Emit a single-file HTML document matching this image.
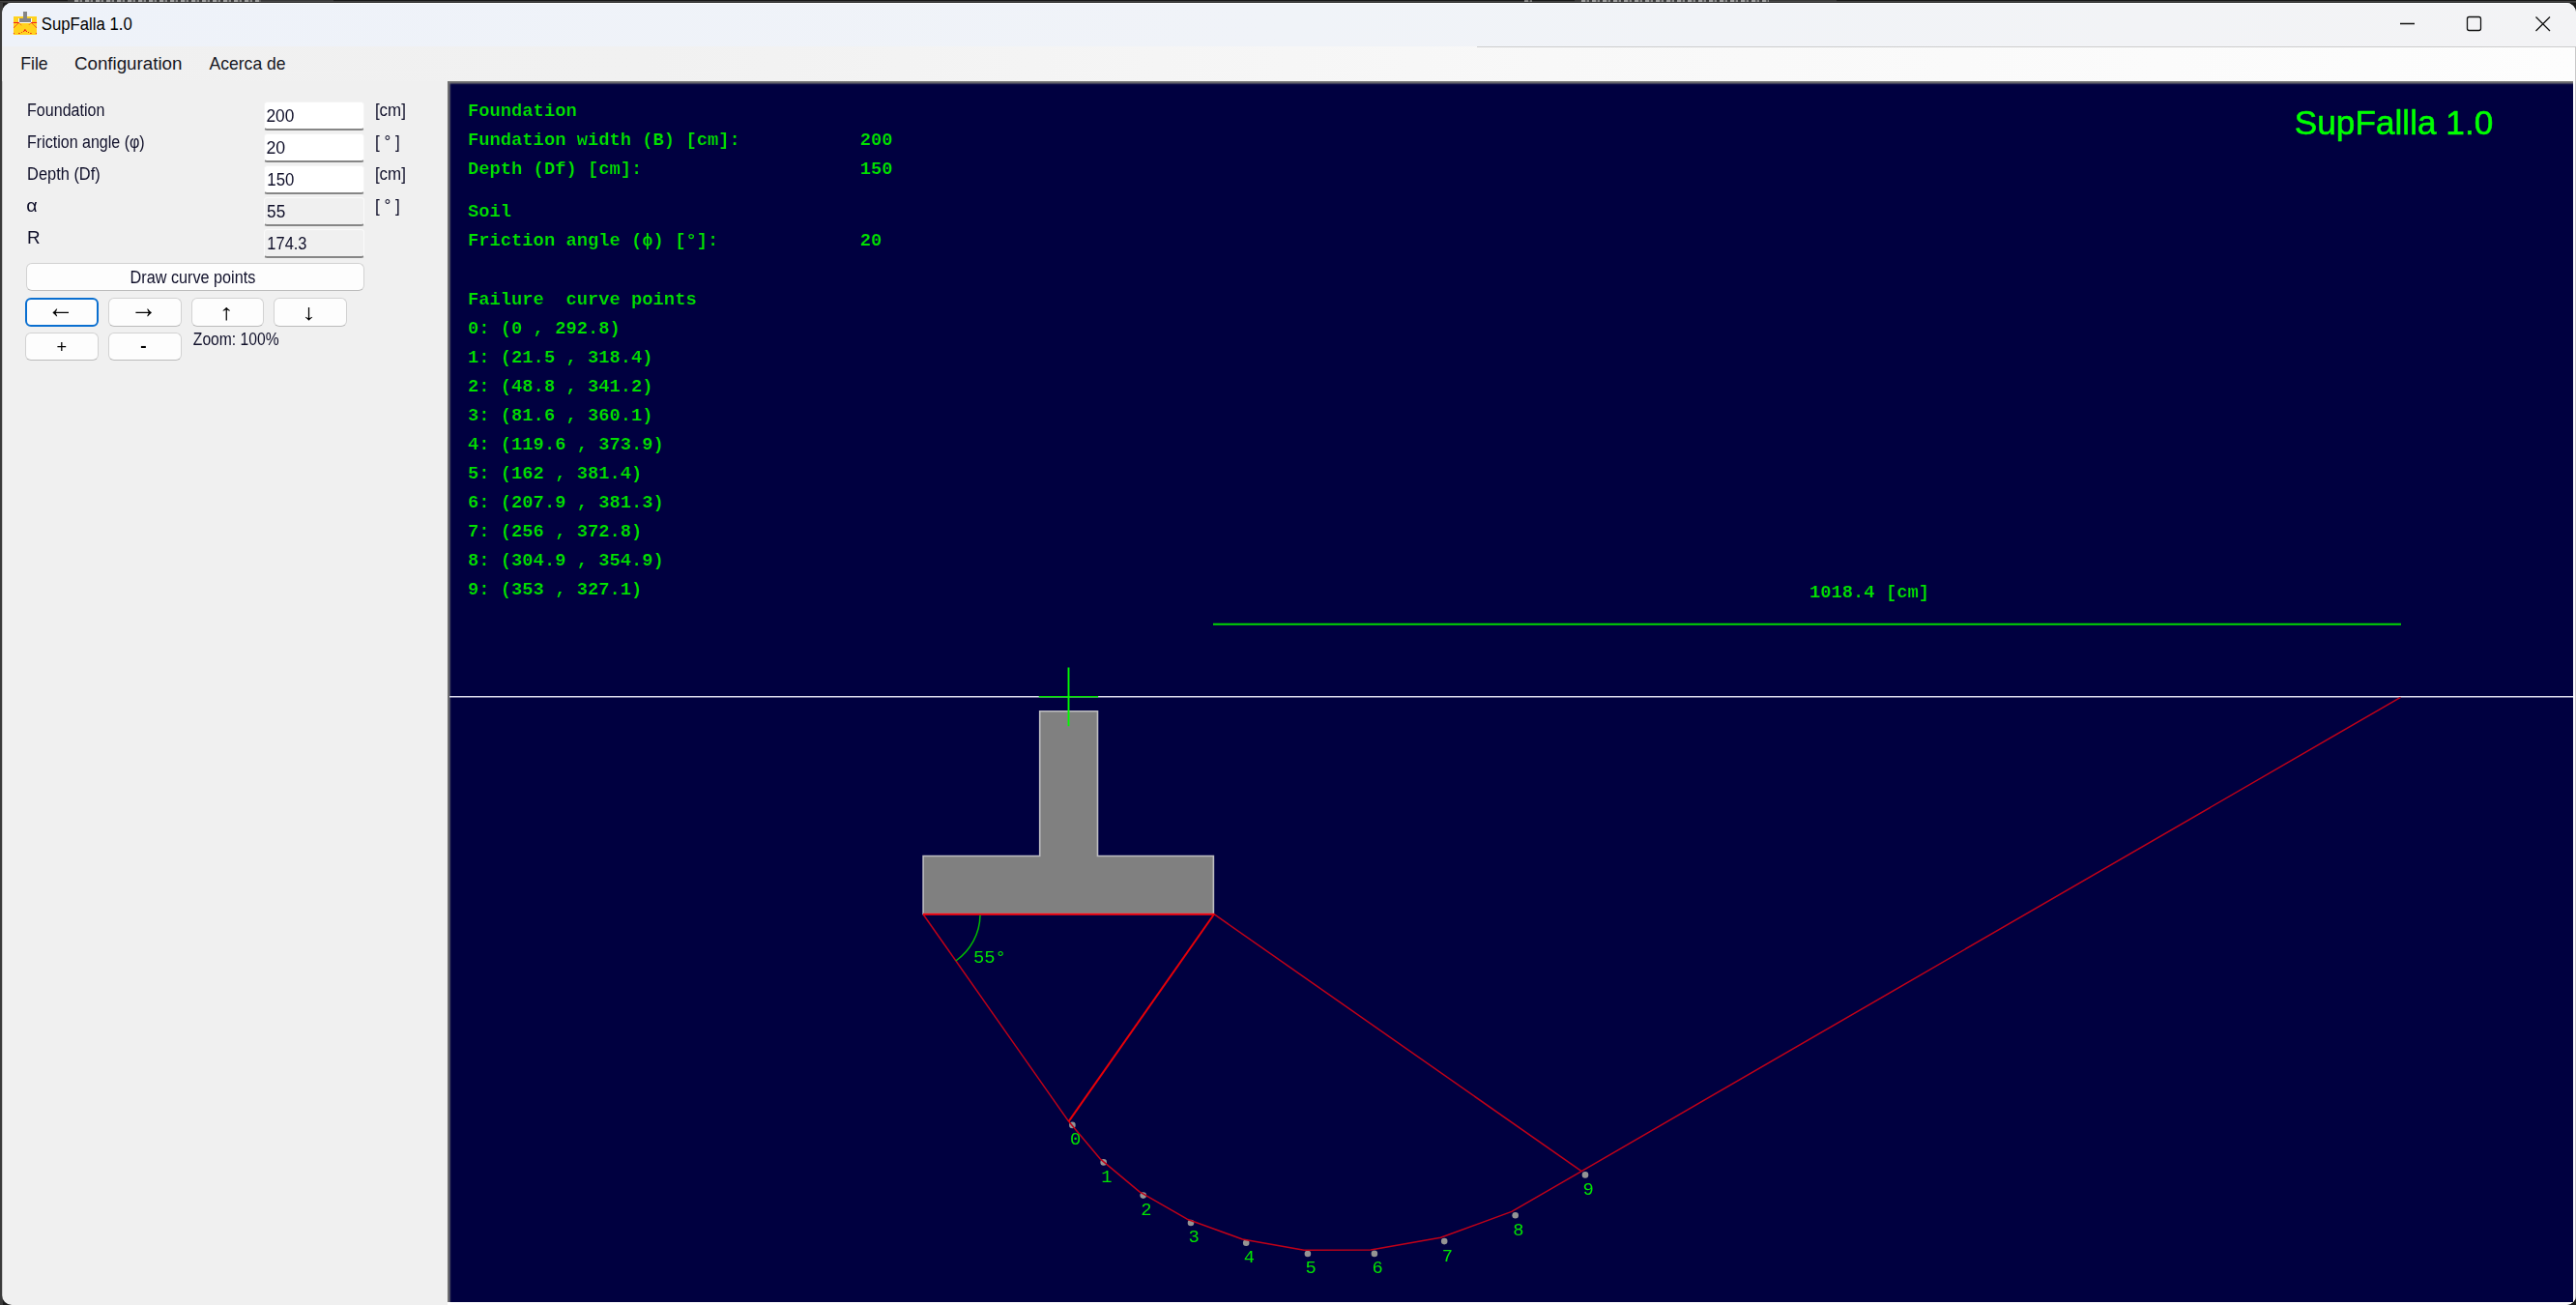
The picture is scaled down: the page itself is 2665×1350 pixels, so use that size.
<!DOCTYPE html>
<html lang="en">
<head>
<meta charset="utf-8">
<title>SupFalla 1.0</title>
<style>
html,body{margin:0;padding:0;}
body{width:2665px;height:1350px;overflow:hidden;background:#1b1b1b;position:relative;font-family:"Liberation Sans","DejaVu Sans",sans-serif;}
.abs{position:absolute;}
#topstrip{position:absolute;left:0;top:0;width:2665px;height:3px;background:#2a2a2a;}
#topstrip{background:linear-gradient(180deg,#181818 0 1px,#424242 1px 2px,#353535 2px 3px);}
#tab1{position:absolute;left:70px;top:0;width:275px;height:3px;background:linear-gradient(180deg,#363636 0 1px,#484848 1px 2px,#343434 2px 3px);}
#tab2{position:absolute;left:1629px;top:0;width:271px;height:3px;background:linear-gradient(180deg,#363636 0 1px,#484848 1px 2px,#343434 2px 3px);}
#hl{position:absolute;left:0;top:3px;width:2665px;height:1px;background:#fbfdff;}
.tt{position:absolute;top:0;height:1.6px;opacity:.7;background:repeating-linear-gradient(90deg,rgba(225,225,225,.85) 0 4px,rgba(225,225,225,.25) 4px 6px,rgba(225,225,225,.7) 6px 8px,transparent 8px 11px);}
#leftedge{position:absolute;left:0;top:3px;width:3px;height:1347px;background:#3a3a3a;}
#win{position:absolute;left:0;top:0;width:2665px;height:1350px;background:#f0f0f0;clip-path:inset(3px 0px 0px 2.2px round 10px 10px 10px 10px);}
#titlebar{position:absolute;left:0;top:0;width:2665px;height:48px;background:linear-gradient(90deg,#eef2f9 0%,#f0f3f8 50%,#f3f3f5 100%);}
#menubar{position:absolute;left:0;top:48px;width:2665px;height:36.2px;background:linear-gradient(90deg,#f0f0f0 0%,#f1f1f1 25%,#f8f8f8 60%,#fdfdfd 100%);}
#menuline{position:absolute;left:1528px;top:48px;width:1137px;height:1px;background:#cdcdcd;}
svg text{white-space:pre;}
.lbl{position:absolute;font-size:17.9px;line-height:20px;color:#141428;white-space:pre;letter-spacing:-0.45px;}
.tb{position:absolute;left:273.4px;width:103.6px;height:29.9px;box-sizing:border-box;background:#fff;border:1px solid #f4f4f4;border-bottom:2px solid #868686;border-radius:3.5px;}
.tb.ro{background:#f0f0f0;border:1px solid #fafafa;border-bottom:2px solid #868686;}
.btn{position:absolute;box-sizing:border-box;background:#fdfdfd;border:1px solid #d2d2d2;border-bottom-color:#bcbcbc;border-radius:6px;font-size:17.9px;text-align:center;color:#141428;letter-spacing:-0.45px;overflow:hidden;}
.btn.focus{border:2px solid #0a6fd0;}
#canvas{position:absolute;left:462.6px;top:84.2px;width:2199.4px;height:1262.8px;background:#000040;box-shadow:inset 2.6px 2.6px 1.4px #747474;}
#rightedge{position:absolute;left:2662px;top:84px;width:2px;height:1266px;background:#fff;}
#rightedge2{position:absolute;left:2664px;top:48px;width:1px;height:1302px;background:#c8c8c8;}
#botedge{position:absolute;left:463px;top:1347px;width:2201px;height:3px;background:#fff;}
</style>
</head>
<body>
<div id="topstrip"></div><div id="tab1"></div><div id="tab2"></div><div class="tt" style="left:77px;width:193px"></div><div class="tt" style="left:1636px;width:194px"></div><div class="tt" style="left:1577px;width:10px;opacity:.6"></div>
<div id="leftedge"></div>
<div id="win">
<div id="titlebar"></div>
<div id="hl"></div>
<div id="menubar"></div>
<div id="menuline"></div>
<svg class="abs" style="left:0;top:0" width="2665" height="90" viewBox="0 0 2665 90">
<g shape-rendering="crispEdges">
<rect x="13.9" y="16.9" width="24.2" height="19" fill="#ffd21e"/>
<rect x="19.1" y="19" width="13.8" height="4.7" fill="#fffbe8"/>
<rect x="19.1" y="19" width="13.8" height="3.8" fill="#ffffff"/>
<rect x="24.1" y="12.2" width="3.8" height="7.4" fill="#858585"/>
<rect x="20.2" y="19.2" width="11.6" height="3.5" fill="#828489"/>
</g>
<g stroke="#f01818" stroke-width="1" fill="none">
<path d="M13.9 23.45 H19.8 M32.2 23.45 H38.1"/>
<path d="M19.6 23.5 L14 28.8 M32.4 23.5 L38 28.8" stroke-dasharray="1.1 0.5"/>
<path d="M19.8 23.6 L22.2 26.2 M32.2 23.6 L29.8 26.0" stroke-opacity=".8" stroke-dasharray="1.1 0.5"/>
</g>
<g fill="#ee1818">
<circle cx="25.9" cy="31.2" r="1.0"/>
<ellipse cx="14.4" cy="34.5" rx="0.60" ry="0.55"/>
<ellipse cx="19.9" cy="34.5" rx="0.95" ry="0.55"/>
<ellipse cx="22.4" cy="33.5" rx="0.55" ry="0.55"/>
<ellipse cx="24.4" cy="32.4" rx="0.55" ry="0.55"/>
<ellipse cx="27.5" cy="32.4" rx="0.55" ry="0.55"/>
<ellipse cx="29.5" cy="33.5" rx="0.55" ry="0.55"/>
<ellipse cx="31.9" cy="34.5" rx="0.95" ry="0.55"/>
<ellipse cx="37.4" cy="34.5" rx="0.60" ry="0.55"/>
</g>
<g font-family='"Liberation Sans","DejaVu Sans",sans-serif'>
<text transform="translate(42.85 30.80) scale(0.9092 1)" font-size="18.4" fill="#000">SupFalla 1.0</text>
<text transform="translate(21.29 71.90) scale(0.9552 1)" font-size="18.4" fill="#16161e">File</text>
<text transform="translate(76.96 71.90) scale(1.0189 1)" font-size="18.4" fill="#16161e">Configuration</text>
<text transform="translate(216.50 71.90) scale(0.9552 1)" font-size="18.4" fill="#16161e">Acerca de</text>
</g>
<g stroke="#111" stroke-width="1.3" fill="none">
<path d="M2483 24.5 H2498"/>
<rect x="2552.5" y="17.5" width="14" height="14" rx="2"/>
<path d="M2623.5 17.5 L2638 32 M2638 17.5 L2623.5 32"/>
</g>
</svg>
<div class="tb" style="top:104.9px"></div>
<div class="tb" style="top:137.9px"></div>
<div class="tb" style="top:170.9px"></div>
<div class="tb ro" style="top:203.9px"></div>
<div class="tb ro" style="top:236.9px"></div>
<div class="btn" style="left:26.5px;top:271.9px;width:350px;height:29.6px"></div>
<div class="btn focus" style="left:26.4px;top:307.5px;width:75.6px;height:30px"></div>
<div class="btn" style="left:112.0px;top:307.5px;width:75.6px;height:30px"></div>
<div class="btn" style="left:197.6px;top:307.5px;width:75.6px;height:30px"></div>
<div class="btn" style="left:283.2px;top:307.5px;width:75.6px;height:30px"></div>
<div class="btn" style="left:26.4px;top:344.3px;width:75.6px;height:28.9px"></div>
<div class="btn" style="left:112.0px;top:344.3px;width:75.6px;height:28.9px"></div>
<svg class="abs" style="left:0;top:0;filter:blur(0.4px)" width="462" height="400" viewBox="0 0 462 400"><g font-family='"Liberation Sans","DejaVu Sans",sans-serif' fill="#10102a"><text transform="translate(28.07 119.90) scale(0.8447 1)" font-size="19">Foundation</text>
<text transform="translate(28.07 152.90) scale(0.8435 1)" font-size="19">Friction angle (φ)</text>
<text transform="translate(28.04 185.80) scale(0.8642 1)" font-size="19">Depth (Df)</text>
<text transform="translate(27.21 218.90) scale(1.0423 1)" font-size="19">α</text>
<text transform="translate(27.89 251.90) scale(0.9907 1)" font-size="19">R</text>
<text transform="translate(387.92 119.90) scale(0.8898 1)" font-size="19">[cm]</text>
<text transform="translate(387.90 152.90) scale(0.8990 1)" font-size="19">[ ° ]</text>
<text transform="translate(387.92 185.80) scale(0.8898 1)" font-size="19">[cm]</text>
<text transform="translate(387.89 218.90) scale(0.9066 1)" font-size="19">[ ° ]</text>
<text transform="translate(275.43 126.00) scale(0.9127 1)" font-size="19">200</text>
<text transform="translate(275.41 159.00) scale(0.9345 1)" font-size="19">20</text>
<text transform="translate(276.34 192.00) scale(0.8834 1)" font-size="19">150</text>
<text transform="translate(276.11 224.90) scale(0.9044 1)" font-size="19">55</text>
<text transform="translate(276.37 257.80) scale(0.8651 1)" font-size="19">174.3</text>
<text transform="translate(134.60 292.80) scale(0.8538 1)" font-size="19">Draw curve points</text>
<text transform="translate(49.04 328.90) scale(1.4541 1.7849)" font-size="19" fill="#000">←</text>
<text transform="translate(134.64 328.90) scale(1.4541 1.7849)" font-size="19" fill="#000">→</text>
<text transform="translate(226.75 330.72) scale(1.6009 1.1954)" font-size="19" fill="#000">↑</text>
<text transform="translate(312.05 330.72) scale(1.6009 1.1954)" font-size="19" fill="#000">↓</text>
<text transform="translate(58.39 365.18) scale(0.9550 0.9237)" font-size="19" fill="#000">+</text>
<text transform="translate(144.98 365.82) scale(1.0741 1.3158)" font-size="19" fill="#000">-</text>
<text transform="translate(199.83 357.00) scale(0.8245 1)" font-size="19">Zoom: 100%</text></g></svg>
<div id="canvas"></div>
<div id="rightedge"></div><div id="rightedge2"></div><div id="botedge"></div>
<svg class="abs" style="left:0;top:0;filter:blur(0.45px)" width="2665" height="1350" viewBox="0 0 2665 1350">
<g font-family='"Liberation Mono","DejaVu Sans Mono",monospace' font-weight="bold" font-size="18.8" fill="#00e000" stroke="#000040" stroke-width="0.15" xml:space="preserve">
<text x="484.0" y="119.8">Foundation</text>
<text x="484.0" y="149.8">Fundation width (B) [cm]:           200</text>
<text x="484.0" y="179.8">Depth (Df) [cm]:                    150</text>
<text x="484.0" y="224.4">Soil</text>
<text x="484.0" y="254.4">Friction angle (ϕ) [°]:             20</text>
<text x="484.0" y="314.6">Failure  curve points</text>
<text x="484.0" y="344.6">0: (0 , 292.8)</text>
<text x="484.0" y="374.6">1: (21.5 , 318.4)</text>
<text x="484.0" y="404.6">2: (48.8 , 341.2)</text>
<text x="484.0" y="434.6">3: (81.6 , 360.1)</text>
<text x="484.0" y="464.6">4: (119.6 , 373.9)</text>
<text x="484.0" y="494.6">5: (162 , 381.4)</text>
<text x="484.0" y="524.6">6: (207.9 , 381.3)</text>
<text x="484.0" y="554.6">7: (256 , 372.8)</text>
<text x="484.0" y="584.6">8: (304.9 , 354.9)</text>
<text x="484.0" y="614.6">9: (353 , 327.1)</text>
<text x="1872" y="617.8">1018.4 [cm]</text>
</g>
<g stroke="#00ff00" stroke-width="0.55" stroke-linejoin="round"><text transform="translate(2373.71 139.10) scale(1.0068 1)" font-size="35.0" fill="#00ff00" font-family='"Liberation Sans","DejaVu Sans",sans-serif'>SupFallla 1.0</text></g>
<line x1="1255" y1="645.7" x2="2484" y2="645.7" stroke="#00d800" stroke-width="2"/>
<line x1="465" y1="720.7" x2="2662" y2="720.7" stroke="#dcdcee" stroke-width="1.6"/>
<line x1="1074.7" y1="720.7" x2="1136.2" y2="720.7" stroke="#00e400" stroke-width="1.6"/>
<path d="M1075.7 735.8 H1135.5 V885.5 H1255.4 V945.5 H955.1 V885.5 H1075.7 Z" fill="#808080" stroke="#bcbcc0" stroke-width="1.6"/>
<line x1="1105.5" y1="690.5" x2="1105.5" y2="751.2" stroke="#00fa00" stroke-width="1.9"/>
<g fill="#949494">
<circle cx="1109.4" cy="1163.9" r="3.3"/>
<circle cx="1141.7" cy="1202.4" r="3.3"/>
<circle cx="1182.7" cy="1236.6" r="3.3"/>
<circle cx="1232.0" cy="1265.0" r="3.3"/>
<circle cx="1289.2" cy="1285.8" r="3.3"/>
<circle cx="1352.9" cy="1297.0" r="3.3"/>
<circle cx="1421.9" cy="1296.9" r="3.3"/>
<circle cx="1494.2" cy="1284.1" r="3.3"/>
<circle cx="1567.7" cy="1257.2" r="3.3"/>
<circle cx="1640.0" cy="1215.4" r="3.3"/>
</g>
<g fill="none" stroke="#c00018" stroke-width="1.5" stroke-linejoin="round">
<path d="M955 945.7 L1105.6 1160.1"/>
<path d="M1256 945.7 L1636.2 1211.6"/>
<path d="M1105.6 1160.1 L1137.9 1198.6 L1178.9 1232.8 L1228.2 1261.2 L1285.4 1282.0 L1349.1 1293.2 L1418.1 1293.1 L1490.4 1280.3 L1563.9 1253.4 L1636.2 1211.6 L2483.5 721.3"/>
</g>
<path d="M1105.6 1160.1 L1256 945.7" fill="none" stroke="#e60008" stroke-width="2"/>
<path d="M955 945.7 H1256.3" fill="none" stroke="#f4000c" stroke-width="2"/>
<path d="M1014.0 946.7 A59 59 0 0 1 988.8 994.0" fill="none" stroke="#00bc00" stroke-width="1.5"/>
<g font-family='"Liberation Mono","DejaVu Sans Mono",monospace' font-size="18.8" fill="#00e400">
<text x="1106.9" y="1184.3">0</text>
<text x="1139.2" y="1222.8">1</text>
<text x="1180.2" y="1257.0">2</text>
<text x="1229.5" y="1285.4">3</text>
<text x="1286.7" y="1306.2">4</text>
<text x="1350.4" y="1317.4">5</text>
<text x="1419.4" y="1317.3">6</text>
<text x="1491.7" y="1304.5">7</text>
<text x="1565.2" y="1277.6">8</text>
<text x="1637.5" y="1235.8">9</text>
<text x="1007" y="996.2">55°</text>
</g>
</svg>
</div>
</body>
</html>
